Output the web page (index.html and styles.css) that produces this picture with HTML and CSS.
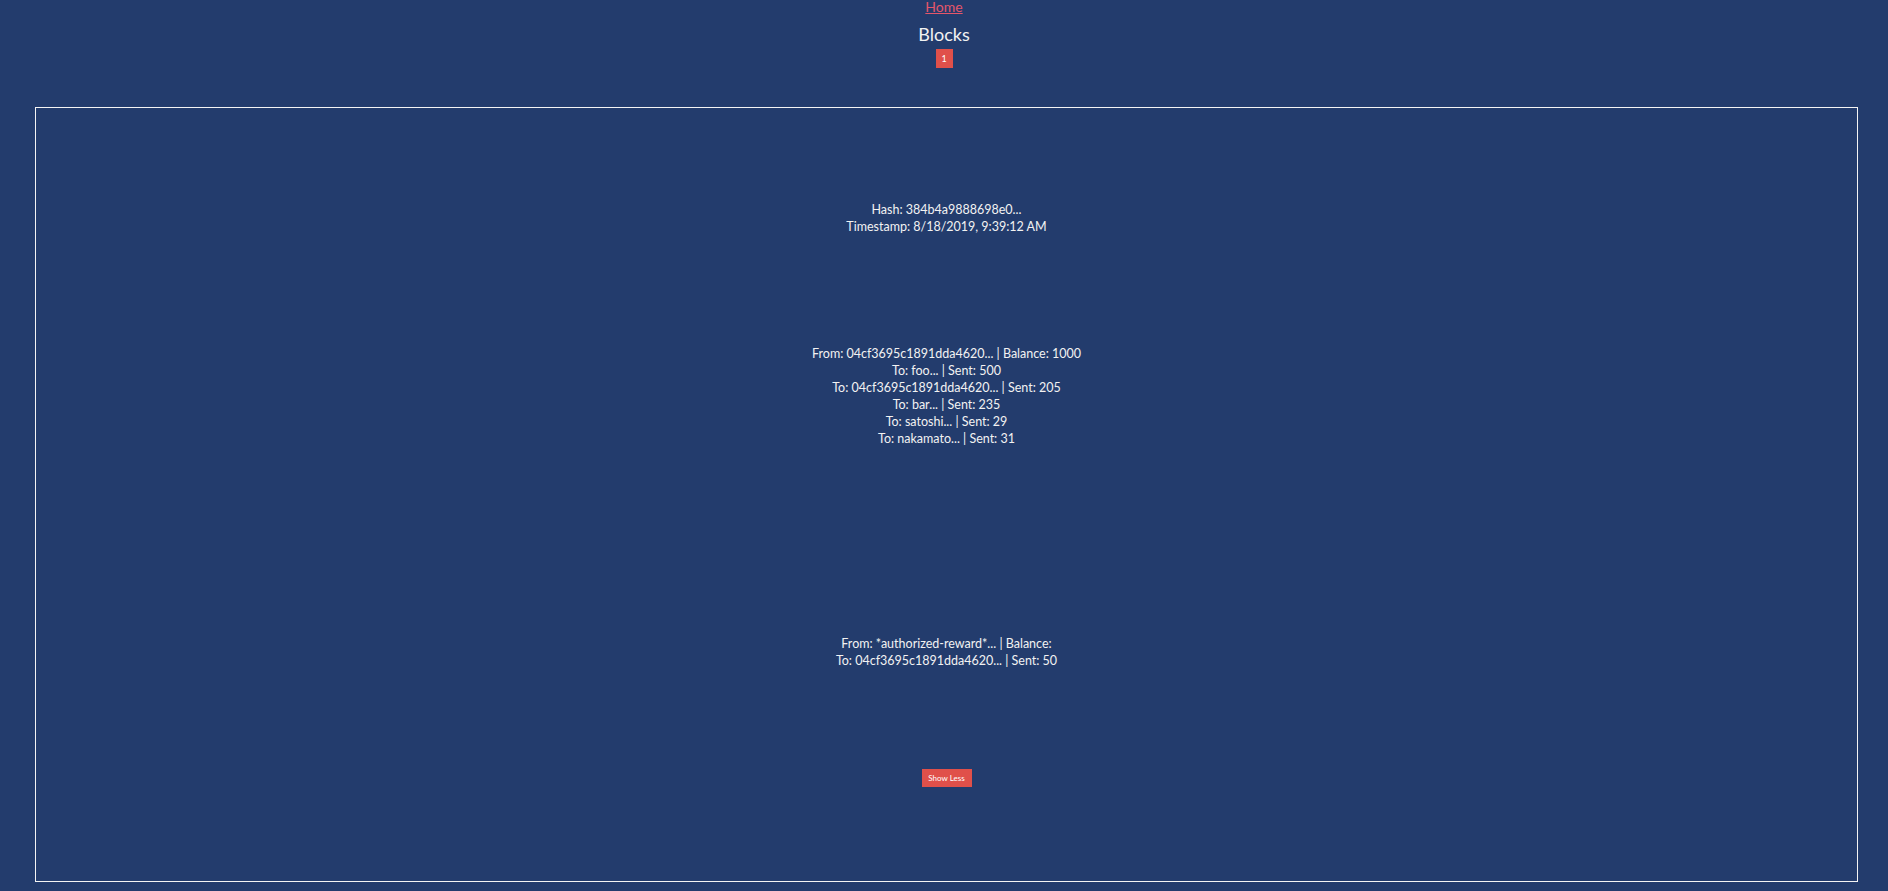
FILE: index.html
```html
<!DOCTYPE html>
<html>
<head>
<meta charset="utf-8">
<title>Blocks</title>
<link rel="stylesheet" href="styles.css">
</head>
<body>
<div class="top">
  <a class="home" href="#">Home</a>
  <div class="title">Blocks</div>
  <div class="pages"><button class="page-btn">1</button></div>
</div>
<div class="block">
  <div class="info">
    <div>Hash: 384b4a9888698e0...</div>
    <div>Timestamp: 8/18/2019, 9:39:12 AM</div>
  </div>
  <div class="tx tx-first">
    <div>From: 04cf3695c1891dda4620... | Balance: 1000</div>
    <div>To: foo... | Sent: 500</div>
    <div>To: 04cf3695c1891dda4620... | Sent: 205</div>
    <div>To: bar... | Sent: 235</div>
    <div>To: satoshi... | Sent: 29</div>
    <div>To: nakamato... | Sent: 31</div>
  </div>
  <div class="tx tx-second">
    <div>From: *authorized-reward*... | Balance:</div>
    <div>To: 04cf3695c1891dda4620... | Sent: 50</div>
  </div>
  <div class="actions"><button class="less-btn">Show Less</button></div>
</div>
</body>
</html>
```

FILE: styles.css
```css
html, body {
  margin: 0;
  padding: 0;
  background: #233c6d;
}
body {
  font-family: Lato, "Noto Sans", sans-serif;
  color: #f2f2f2;
  font-size: 12.5px;
  line-height: 17px;
  text-align: center;
  height: 891px;
  overflow: hidden;
}
.top {
  display: flex;
  flex-direction: column;
  align-items: center;
}
.home {
  color: #e5566a;
  font-size: 14px;
  line-height: 14px;
}
.title {
  font-size: 18px;
  line-height: 24px;
  margin-top: 8px;
}
.pages {
  margin-top: 3px;
}
.page-btn {
  display: block;
  width: 17px;
  height: 19px;
  padding: 0;
  border: none;
  background: #e0504a;
  color: #fff;
  font-family: inherit;
  font-size: 9px;
}
.block {
  margin: 39px 30px 0 35px;
  border: 1px solid #f4f4f4;
  box-sizing: border-box;
  height: 775px;
  padding-top: 93px;
}
.tx-first {
  margin-top: 110px;
}
.tx-second {
  margin-top: 188px;
}
.actions {
  margin-top: 99px;
}
.less-btn {
  width: 50px;
  height: 18px;
  padding: 0;
  border: none;
  background: #e0504a;
  color: #fff;
  font-family: inherit;
  font-size: 8px;
}
```
